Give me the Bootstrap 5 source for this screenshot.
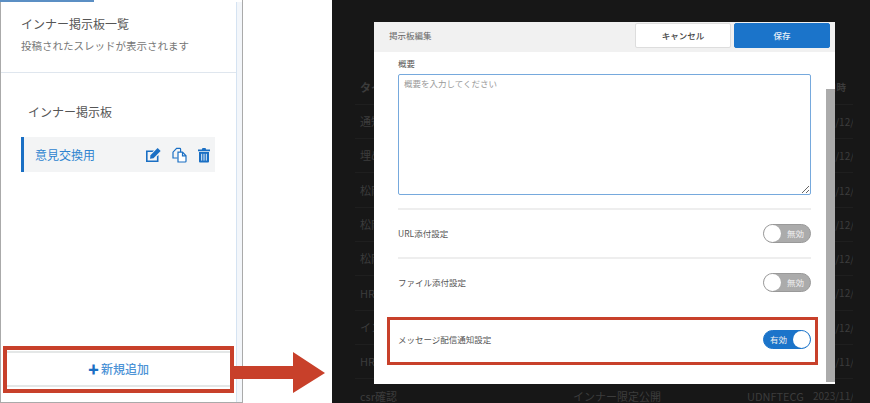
<!DOCTYPE html>
<html lang="ja">
<head>
<meta charset="utf-8">
<title>インナー掲示板</title>
<link href="https://cdn.jsdelivr.net/npm/bootstrap@5.3.0/dist/css/bootstrap.min.css" rel="stylesheet">
<style>
html,body{width:870px;height:403px;overflow:hidden;background:#fff;}
body{font-family:"Noto Sans CJK JP","Noto Sans",sans-serif;position:relative;color:#555;}
.stage{width:870px;height:403px;}
.leftp{width:243px;height:403px;flex:none;border-left:1px solid #aaa;border-right:1px solid #aaa;border-bottom:1px solid #aaa;position:relative;}
.topline{height:2px;width:94px;background:#5b8fc4;margin-left:-1px;flex:none;}
.leftmain{min-height:0;}
.strip{width:6px;background:#f3f6fa;border-left:1px solid #d5e3f2;flex:none;}
.lhead{height:71px;padding:13px 0 0 20px;border-bottom:1px solid #dfe6ee;margin-right:-6px;}
.ltitle{font-size:12px;line-height:18px;color:#555;}
.lsub{font-size:10.5px;line-height:16px;color:#777;margin-top:5px;}
.lsec{font-size:12px;line-height:18px;color:#555;margin:30px 0 0 27px;}
.litem{margin:16px 21px 0 20px;height:35px;background:#f3f4f5;border-left:3px solid #1a6fc4;padding:0 4px 0 11px;}
.litem span{font-size:12px;color:#2f84d0;}
.icg{margin-left:10px;}
.lbtnwrap{margin:auto 6px 0 6px;height:36px;margin-bottom:15px;border-top:2px solid #e4e7e7;border-bottom:2px solid #e4e7e7;font-size:12px;font-weight:500;color:#4d93d6;gap:2px;}
.plus{color:#1a6fc4;font-weight:700;font-size:11px;line-height:1;}
.gapz{width:89px;flex:none;}
.darkp{flex:1 1 auto;height:403px;background:#171717;position:relative;overflow:hidden;}
.tclip{width:498px;margin:70px 0 0 23px;overflow:hidden;}
.bgtable{--bs-table-bg:transparent;--bs-table-color:#3c3c3c;--bs-table-border-color:#1f1f1f;table-layout:fixed;width:498px;margin:0;font-size:11px;color:#3c3c3c;}
.bgtable td,.bgtable th{height:34.3px;padding:0 5px;vertical-align:middle;white-space:nowrap;overflow:hidden;background:transparent;color:#3c3c3c;}
.bgtable td.datec{font-size:10px;}
.bgtable th.datec{font-size:9.5px;padding:0 8px 0 0;text-align:right;}
.modalbox{position:absolute;left:42px;top:22px;width:461px;height:362px;background:#fff;}
.mhead{height:30px;background:#f1f1f1;padding:0 5px 3px 15px;flex:none;}
.mtitle{font-size:8.5px;color:#666;}
.bcancel{width:96px;height:25px;padding:0;font-size:8.5px;font-weight:500;background:#fff;color:#444;border:1px solid #ddd;border-radius:2px;}
.bsave{width:96px;height:25px;padding:0;margin-left:3px;font-size:8.5px;font-weight:500;background:#1b74ca;color:#e8f0f8;border:1px solid #1b74ca;border-radius:2px;}
.mbody{padding:0 24px;}
.flabel{font-size:8.5px;line-height:14px;color:#555;margin-top:4px;margin-bottom:4px;}
.farea{height:121px;width:100%;font-size:8.5px;padding:1px 5px;line-height:14px;border:1px solid #76a9dd;border-radius:2px;display:block;}
.farea::placeholder{color:#999;}
.frow{height:49px;border-top:2px solid #eee;font-size:8.5px;color:#555;}
.frow.one{margin-top:13px;}
.frow.plain{border-top:0;height:47px;margin-top:10px;}
.tog{width:48px;height:19px;border-radius:10px;background:#ababab;border:1px solid #999;padding:0;font-size:8.5px;color:#f0f0f0;}
.tog i{width:17px;height:17px;border-radius:50%;background:#fff;display:block;flex:none;}
.tog.on{background:#1b74ca;border-color:#1b74ca;}
.tog span{flex:1 1 auto;text-align:center;}
.thumb{position:absolute;right:0;top:67px;bottom:2px;width:9px;background:#ababab;}
.redbox{position:absolute;border:3px solid #c8402a;pointer-events:none;}
.rb1{left:3px;top:346px;width:231px;height:47px;border-width:4px;}
.rb2{left:387px;top:317px;width:431px;height:48px;}
.arrowsvg{position:absolute;left:234px;top:350px;}
.ic{display:block;}
</style>
</head>
<body>
<div class="stage d-flex">
  <div class="leftp d-flex flex-column">
    <div class="topline"></div>
    <div class="d-flex flex-grow-1 leftmain">
      <div class="flex-grow-1 d-flex flex-column">
        <div class="lhead">
          <div class="ltitle">インナー掲示板一覧</div>
          <div class="lsub">投稿されたスレッドが表示されます</div>
        </div>
        <div class="lsec">インナー掲示板</div>
        <div class="litem d-flex align-items-center">
          <span class="flex-grow-1">意見交換用</span>
          <svg class="ic" width="17" height="16" viewBox="0 0 17 16"><path d="M1 3.5h8l-1.6 1.6H2.6v8.3h9.3V9.5l1.6-1.6V15H1z" fill="#1a6fc4"/><path d="M5.5 8.2 12.6 1l3 3-7.1 7.2-3.5.6z" fill="#1a6fc4"/></svg>
          <svg class="ic icg" width="15" height="16" viewBox="0 0 15 16" fill="none" stroke="#1a6fc4" stroke-width="1.2"><path d="M5.5 11H1V5.2L4.6 1.4h3.2a.8.8 0 0 1 .8.8V5"/><path d="M6 5.2h4.5L14 8.8v5.4a.8.8 0 0 1-.8.8H6z" fill="#fff"/><path d="M10.5 5.2v3.6H14"/></svg>
          <svg class="ic icg" width="14" height="16" viewBox="0 0 14 16"><path d="M1 2.4h3.8L5.5 1h3l.7 1.4H13v1.8H1z" fill="#1a6fc4"/><path d="M2 5h10v9.6a1 1 0 0 1-1 1H3a1 1 0 0 1-1-1z" fill="#1a6fc4"/><path d="M4.7 6.8v6.8M7 6.8v6.8M9.3 6.8v6.8" stroke="#e7f0f9" stroke-width="1"/></svg>
        </div>
        <div class="lbtnwrap d-flex align-items-center justify-content-center"><span class="plus">✚</span>新規追加</div>
      </div>
      <div class="strip"></div>
    </div>
  </div>
  <div class="gapz"></div>
  <div class="darkp">
    <div class="tclip">
      <table class="table bgtable">
        <colgroup><col style="width:213px"><col style="width:174px"><col style="width:66px"><col style="width:45px"></colgroup>
        <tr><th>タイトル</th><th>公開範囲</th><th>作成者</th><th class="datec">更新日時</th></tr>
        <tr><td>通知確認</td><td>インナー限定公開</td><td>UDNFTECG</td><td class="datec">2023/12/</td></tr>
        <tr><td>埋め込み</td><td>インナー限定公開</td><td>UDNFTECG</td><td class="datec">2023/12/</td></tr>
        <tr><td>松岡確認</td><td>インナー限定公開</td><td>UDNFTECG</td><td class="datec">2023/12/</td></tr>
        <tr><td>松岡確認</td><td>インナー限定公開</td><td>UDNFTECG</td><td class="datec">2023/12/</td></tr>
        <tr><td>松岡確認</td><td>インナー限定公開</td><td>UDNFTECG</td><td class="datec">2023/12/</td></tr>
        <tr><td>HR確認</td><td>インナー限定公開</td><td>UDNFTECG</td><td class="datec">2023/12/</td></tr>
        <tr><td>インナー</td><td>インナー限定公開</td><td>UDNFTECG</td><td class="datec">2023/12/</td></tr>
        <tr><td>HR確認</td><td>インナー限定公開</td><td>UDNFTECG</td><td class="datec">2023/11/</td></tr>
        <tr><td>csr確認</td><td>インナー限定公開</td><td>UDNFTECG</td><td class="datec">2023/11/</td></tr>
      </table>
    </div>
    <div class="modalbox d-flex flex-column">
      <div class="mhead d-flex align-items-center">
        <div class="mtitle flex-grow-1">掲示板編集</div>
        <button type="button" class="btn bcancel">キャンセル</button>
        <button type="button" class="btn bsave">保存</button>
      </div>
      <div class="mbody">
        <div class="flabel">概要</div>
        <textarea class="form-control farea" placeholder="概要を入力してください"></textarea>
        <div class="frow one d-flex align-items-center justify-content-between">
          <span>URL添付設定</span>
          <div class="tog d-flex align-items-center"><i></i><span>無効</span></div>
        </div>
        <div class="frow d-flex align-items-center justify-content-between">
          <span>ファイル添付設定</span>
          <div class="tog d-flex align-items-center"><i></i><span>無効</span></div>
        </div>
        <div class="frow plain d-flex align-items-center justify-content-between">
          <span>メッセージ配信通知設定</span>
          <div class="tog on d-flex align-items-center"><span>有効</span><i></i></div>
        </div>
      </div>
      <div class="thumb"></div>
    </div>
  </div>
</div>
<div class="redbox rb1"></div>
<div class="redbox rb2"></div>
<svg class="arrowsvg" width="92" height="44" viewBox="0 0 92 44"><path d="M0 16H59V2L91 23 59 43V29H0z" fill="#c8402a"/></svg>
<script src="https://cdn.jsdelivr.net/npm/bootstrap@5.3.0/dist/js/bootstrap.bundle.min.js"></script>
</body>
</html>
